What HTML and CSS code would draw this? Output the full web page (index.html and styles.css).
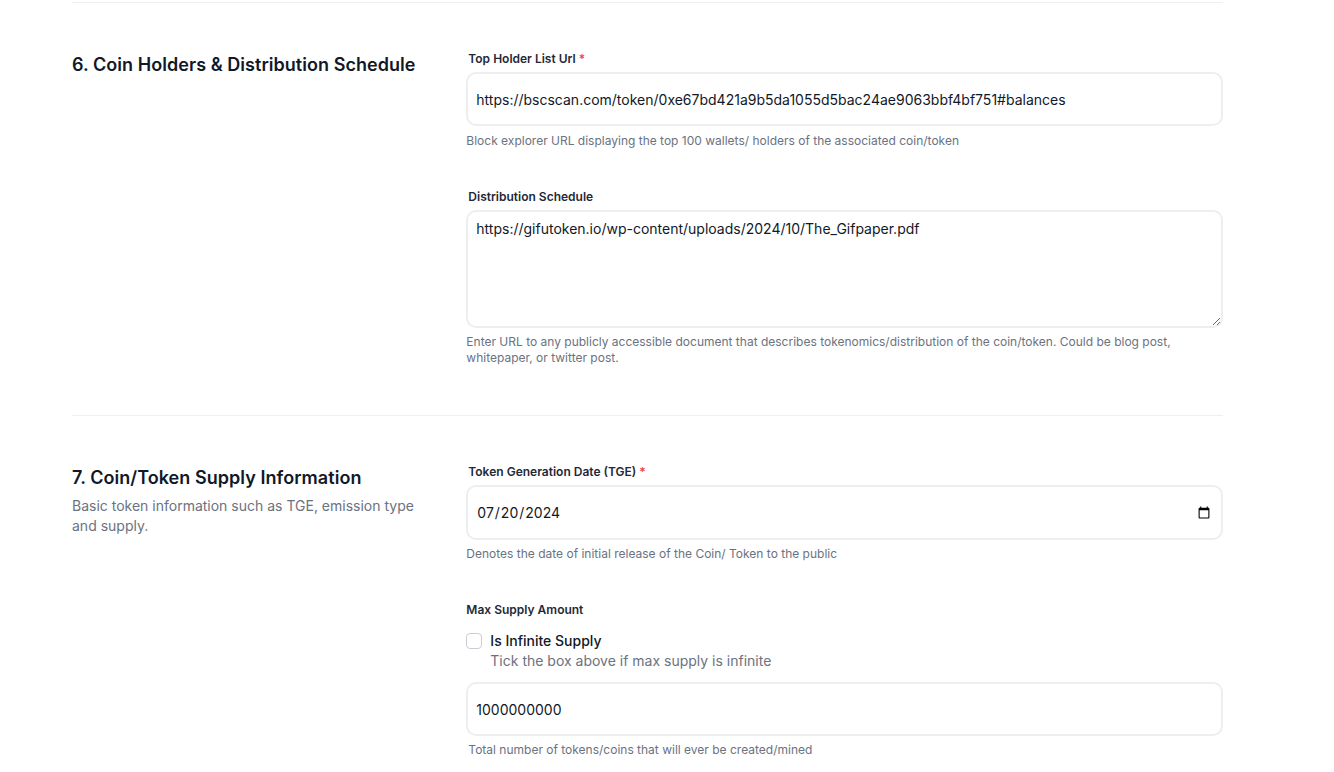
FILE: index.html
```html
<!DOCTYPE html>
<html lang="en">
<head>
<meta charset="utf-8">
<title>Coin form</title>
<link rel="stylesheet" href="styles.css">
</head>
<body>
<div class="page">
  <section class="section">
    <div class="intro">
      <h2 class="title">6. Coin Holders &amp; Distribution Schedule</h2>
    </div>
    <div class="fields">
      <div class="field">
        <label class="label shift">Top Holder List Url <span class="req">*</span></label>
        <input class="input" type="text" value="https://bscscan.com/token/0xe67bd421a9b5da1055d5bac24ae9063bbf4bf751#balances">
        <p class="help help-lg">Block explorer URL displaying the top 100 wallets/ holders of the associated coin/token</p>
      </div>
      <div class="field">
        <label class="label shift">Distribution Schedule</label>
        <textarea class="input area">https://gifutoken.io/wp-content/uploads/2024/10/The_Gifpaper.pdf</textarea>
        <p class="help">Enter URL to any publicly accessible document that describes tokenomics/distribution of the coin/token. Could be blog post, whitepaper, or twitter post.</p>
      </div>
    </div>
  </section>
  <section class="section">
    <div class="intro">
      <h2 class="title">7. Coin/Token Supply Information</h2>
      <p class="desc">Basic token information such as TGE, emission type and supply.</p>
    </div>
    <div class="fields">
      <div class="field">
        <label class="label shift">Token Generation Date (TGE) <span class="req">*</span></label>
        <input class="input date" type="date" value="2024-07-20">
        <p class="help">Denotes the date of initial release of the Coin/ Token to the public</p>
      </div>
      <div class="field">
        <label class="label">Max Supply Amount</label>
        <div class="check-row">
          <input class="check" type="checkbox" id="inf">
          <div class="check-text">
            <label class="check-label" for="inf">Is Infinite Supply</label>
            <p class="check-help">Tick the box above if max supply is infinite</p>
          </div>
        </div>
        <input class="input supply" type="text" value="1000000000">
        <p class="help shift">Total number of tokens/coins that will ever be created/mined</p>
      </div>
    </div>
  </section>
</div>
</body>
</html>
```
FILE: styles.css
```css
* { box-sizing: border-box; }
html, body { margin: 0; padding: 0; background: #fff; }
body {
  font-family: Inter, "Noto Sans", sans-serif;
  color: #111827;
}
.page {
  width: 1151px;
  margin-left: 72px;
  padding-top: 2px;
}
.section {
  display: grid;
  grid-template-columns: repeat(3, minmax(0, 1fr));
  column-gap: 32px;
  border-top: 1px solid #eeeff1;
  padding: 48px 0 49px;
}
.section + .section { padding-bottom: 0; }
.intro { grid-column: 1; }
.fields {
  grid-column: span 2;
  display: flex;
  flex-direction: column;
  gap: 40px;
  min-width: 0;
}
.title {
  margin: 0;
  font-size: 18px;
  line-height: 28px;
  font-weight: 600;
  letter-spacing: 0.05px;
  color: #111827;
}
.desc {
  margin: 4px 0 0;
  font-size: 14px;
  line-height: 20px;
  color: #6b7280;
  max-width: 350px;
}
.field { display: flex; flex-direction: column; }
.label {
  display: block;
  font-size: 12px;
  line-height: 16px;
  font-weight: 600;
  color: #1f2937;
}
.shift { padding-left: 2px; }
.req { color: #ef4444; }
.input {
  display: block;
  width: 100%;
  margin: 5px 0 0;
  font-family: Inter, "Noto Sans", sans-serif;
  font-size: 14px;
  line-height: 20px;
  color: #111827;
  border: 2px solid #eceef2;
  border-radius: 10px;
  padding: 15px 8px;
  height: 54px;
  background: #fff;
  outline: none;
}
.date { height: 55px; }
.area {
  height: 118px;
  padding: 7px 8px;
  resize: vertical;
}
.help {
  margin: 6px 0 0;
  font-size: 12px;
  line-height: 16px;
  color: #6b7280;
}
.help-lg { margin-top: 7px; }
.check-row {
  display: flex;
  gap: 8px;
  margin-top: 13px;
}
.check {
  appearance: none;
  -webkit-appearance: none;
  width: 16px;
  height: 16px;
  margin: 2px 0 0;
  border: 1px solid #c9ced6;
  border-radius: 4px;
  background: #fff;
  flex: none;
}
.check-text { display: flex; flex-direction: column; }
.check-label {
  font-size: 14px;
  line-height: 20px;
  font-weight: 500;
  color: #111827;
}
.check-help {
  margin: 0;
  font-size: 14px;
  line-height: 20px;
  color: #6b7280;
}
.supply { margin-top: 11px; }
```
